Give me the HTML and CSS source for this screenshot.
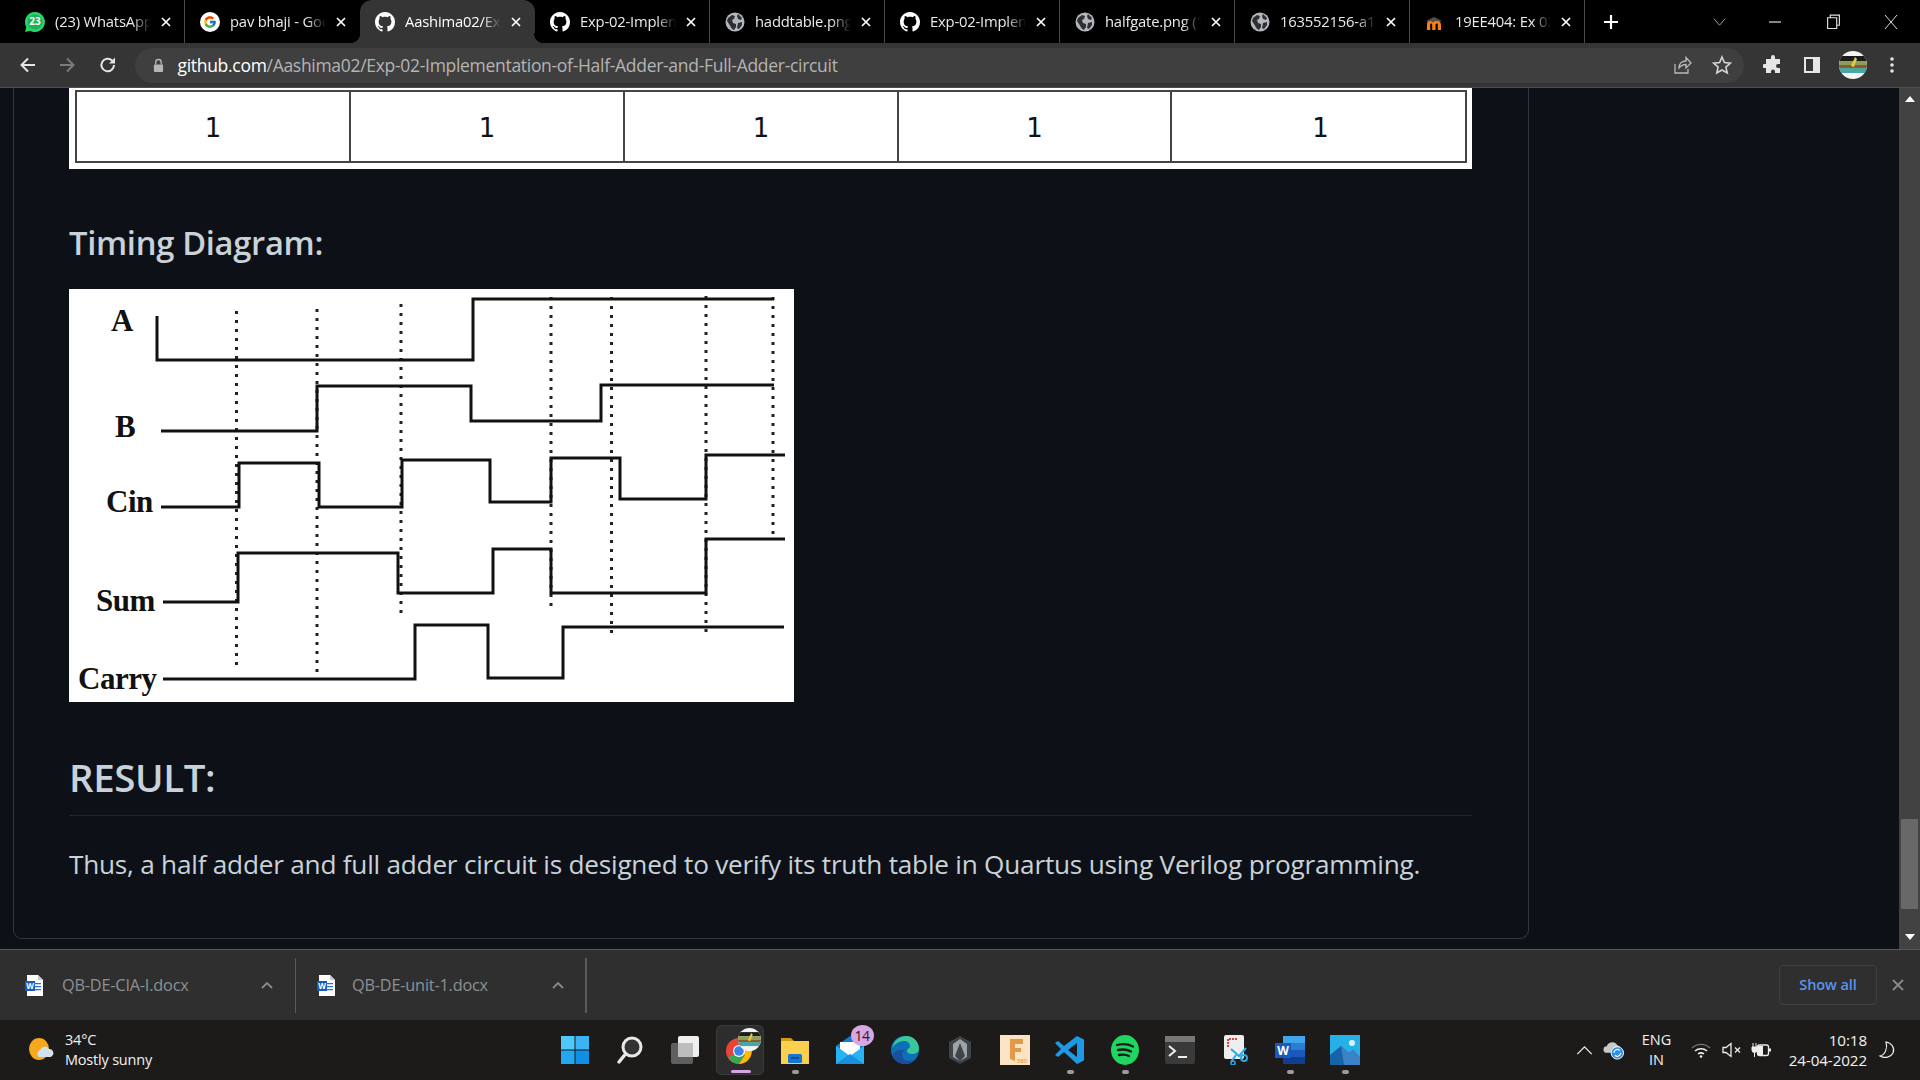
FILE: index.html
```html
<!DOCTYPE html>
<html lang="en">
<head>
<meta charset="utf-8">
<title>Exp-02</title>
<link rel="stylesheet" href="styles.css">
</head>
<body>
<svg class="defs" aria-hidden="true">
  <symbol id="gh" viewBox="0 0 16 16"><path fill="currentColor" d="M8 0C3.58 0 0 3.58 0 8c0 3.54 2.29 6.53 5.47 7.59.4.07.55-.17.55-.38 0-.19-.01-.82-.01-1.49-2.01.37-2.53-.49-2.69-.94-.09-.23-.48-.94-.82-1.13-.28-.15-.68-.52-.01-.53.63-.01 1.08.58 1.23.82.72 1.21 1.87.87 2.33.66.07-.52.28-.87.51-1.07-1.78-.2-3.64-.89-3.64-3.95 0-.87.31-1.59.82-2.15-.08-.2-.36-1.02.08-2.12 0 0 .67-.21 2.2.82.64-.18 1.32-.27 2-.27.68 0 1.36.09 2 .27 1.53-1.04 2.2-.82 2.2-.82.44 1.1.16 1.92.08 2.12.51.56.82 1.27.82 2.15 0 3.07-1.87 3.75-3.65 3.95.29.25.54.73.54 1.48 0 1.07-.01 1.93-.01 2.2 0 .21.15.46.55.38A8.013 8.013 0 0016 8c0-4.42-3.58-8-8-8z"/></symbol>
  <symbol id="globe" viewBox="0 0 20 20"><circle cx="10" cy="10" r="9.500" fill="#b4b7bb"/><path fill="#2d2f33" d="M3 6l4-3 3 1-1 3-2 1 1 3 3 1v3l-2 3c-3-1-4-5-5-6L2 9zM13 2l4 4-1 2-3-1-1-3zM13 11l4-1 0 3-3 4-2-1z"/></symbol>
  <symbol id="x" viewBox="0 0 12 12"><path d="M2 2l8 8M10 2l-8 8" stroke="currentColor" stroke-width="1.700" fill="none"/></symbol>
  <symbol id="word" viewBox="0 0 18 21"><path fill="#fff" d="M2 0h11l5 5v16H2z"/><path fill="#c9ccd2" d="M13 0l5 5h-5z"/><path fill="#2b6fd0" d="M10 8h6v1.200h-6zM10 11h6v1.200h-6zM10 14h6v1.200h-6z"/><rect y="6" width="10" height="10" fill="#185abd"/><text x="5" y="14.200" class="wordw">W</text></symbol>
  <symbol id="avatar" viewBox="0 0 28 28"><clipPath id="av"><circle cx="14" cy="14" r="14"/></clipPath><g clip-path="url(#av)"><rect width="28" height="28" fill="#f4f4f4"/><rect y="5" width="28" height="5" fill="#1c1c1c"/><rect y="10" width="28" height="4" fill="#8d9d5a"/><rect y="14" width="28" height="3" fill="#8a5a2d"/><rect y="17" width="28" height="5" fill="#49a6a0"/><path d="M12 15l4-9 2 2-3 8z" fill="#e6c93a"/></g></symbol>
</svg>

<div class="tabstrip">
  <div class="tab">
    <svg class="fav" viewBox="0 0 20 20"><path d="M10 0a10 10 0 1 1-5 18.700L0 20l1.300-5A10 10 0 0 1 10 0z" fill="#2bd46b"/><circle cx="10" cy="10" r="7.500" fill="#1eb257"/><text x="10" y="13.400" class="wa">23</text></svg>
    <span class="tab-title">(23) WhatsApp</span><svg class="tabx"><use href="#x"/></svg>
  </div>
  <div class="tab">
    <svg class="fav" viewBox="0 0 48 48"><circle cx="24" cy="24" r="24" fill="#fff"/><g transform="translate(7.200 7.200) scale(.7)"><path fill="#FFC107" d="M43.600 20.500H42V20H24v8h11.300C33.700 32.700 29.200 36 24 36c-6.600 0-12-5.400-12-12s5.400-12 12-12c3.100 0 5.800 1.200 8 3l5.700-5.700C34.100 6.100 29.300 4 24 4 13 4 4 13 4 24s9 20 20 20 20-9 20-20c0-1.200-.1-2.300-.4-3.500z"/><path fill="#FF3D00" d="M6.300 14.700l6.600 4.800C14.700 15.100 19 12 24 12c3.100 0 5.800 1.200 8 3l5.700-5.700C34.100 6.100 29.300 4 24 4 16.300 4 9.700 8.300 6.300 14.700z"/><path fill="#4CAF50" d="M24 44c5.200 0 9.900-2 13.400-5.200l-6.200-5.200C29.200 35.100 26.700 36 24 36c-5.200 0-9.600-3.300-11.300-7.900l-6.500 5C9.500 39.600 16.200 44 24 44z"/><path fill="#1976D2" d="M43.600 20.500H42V20H24v8h11.300c-.8 2.200-2.200 4.200-4.100 5.600l6.200 5.200C37 39.200 44 34 44 24c0-1.200-.1-2.300-.4-3.500z"/></g></svg>
    <span class="tab-title">pav bhaji - Google</span><svg class="tabx"><use href="#x"/></svg>
  </div>
  <div class="tab active">
    <svg class="fav"><use href="#gh"/></svg>
    <span class="tab-title">Aashima02/Exp-02</span><svg class="tabx"><use href="#x"/></svg>
  </div>
  <div class="tab">
    <svg class="fav"><use href="#gh"/></svg>
    <span class="tab-title">Exp-02-Implementation</span><svg class="tabx"><use href="#x"/></svg>
  </div>
  <div class="tab">
    <svg class="fav"><use href="#globe"/></svg>
    <span class="tab-title">haddtable.png (1)</span><svg class="tabx"><use href="#x"/></svg>
  </div>
  <div class="tab">
    <svg class="fav"><use href="#gh"/></svg>
    <span class="tab-title">Exp-02-Implementation</span><svg class="tabx"><use href="#x"/></svg>
  </div>
  <div class="tab">
    <svg class="fav"><use href="#globe"/></svg>
    <span class="tab-title">halfgate.png (1)</span><svg class="tabx"><use href="#x"/></svg>
  </div>
  <div class="tab">
    <svg class="fav"><use href="#globe"/></svg>
    <span class="tab-title">163552156-a1b2</span><svg class="tabx"><use href="#x"/></svg>
  </div>
  <div class="tab">
    <svg class="fav" viewBox="0 0 20 20"><path d="M1 9l8-4 8 4-8 3z" fill="#55504a"/><path d="M2 18v-6c0-2 1-3 3-3 1 0 2 .5 3 1.500C9 9.500 10 9 12 9c3 0 4 2 4 4v5h-3.200v-5c0-1-.3-1.500-1-1.500s-1.300.5-1.300 1.500v5H7.200v-5c0-1-.3-1.500-1-1.500s-1 .5-1 1.500v5z" fill="#f98012"/></svg>
    <span class="tab-title">19EE404: Ex 02</span><svg class="tabx"><use href="#x"/></svg>
  </div>
  <svg class="newtab" viewBox="0 0 16 16"><path d="M8 1v14M1 8h14" stroke="#fff" stroke-width="2.200"/></svg>
  <div class="winctl">
    <svg class="wc wc-first" viewBox="0 0 14 14"><path d="M1 4l6 7 6-7" fill="none" stroke="#aaa" stroke-width="1"/></svg>
    <svg class="wc" viewBox="0 0 14 14"><path d="M1 7h12" stroke="#ddd" stroke-width="1.200"/></svg>
    <svg class="wc" viewBox="0 0 14 14"><path d="M1.500 3.500h8.500v10H1.500zM4 3.500V1h8.500v9.500H10" fill="none" stroke="#ddd" stroke-width="1.100"/></svg>
    <svg class="wc" viewBox="0 0 14 14"><path d="M1 0l12 14M13 0L1 14" stroke="#ddd" stroke-width="1"/></svg>
  </div>
</div>

<div class="toolbar">
  <svg class="nav" viewBox="0 0 20 20"><path d="M17 10H4M10 3.500L3.500 10l6.500 6.500" fill="none" stroke="#e6e6e6" stroke-width="2"/></svg>
  <svg class="nav" viewBox="0 0 20 20"><path d="M3 10h13M10 3.500l6.500 6.500-6.500 6.500" fill="none" stroke="#7b7b7b" stroke-width="2"/></svg>
  <svg class="nav" viewBox="0 0 20 20"><path d="M16 10a6.300 6.300 0 1 1-1.900-4.500" fill="none" stroke="#e6e6e6" stroke-width="2"/><path d="M17 2.500v6h-6z" fill="#e6e6e6"/></svg>
  <div class="omnibox">
    <svg class="lock" viewBox="0 0 12 16"><path d="M3 7V4.500a3 3 0 0 1 6 0V7" fill="none" stroke="#b5b5b5" stroke-width="1.500"/><rect x="1" y="7" width="10" height="8" rx="1" fill="#b5b5b5"/></svg>
    <span class="url"><b>github.com</b>/Aashima02/Exp-02-Implementation-of-Half-Adder-and-Full-Adder-circuit</span>
    <svg class="omni-share" viewBox="0 0 20 20"><path d="M3 9v9h13v-4M7 13c0-5 3-7 7-7V2.500L19 8l-5 5V9.500c-3 0-5 1-7 3.500z" fill="none" stroke="#b9b9b9" stroke-width="1.300"/></svg>
    <svg class="omni-star" viewBox="0 0 20 20"><path d="M10 2l2.400 5.500 6 .6-4.500 4 1.300 5.900L10 15l-5.200 3 1.300-5.900-4.500-4 6-.6z" fill="none" stroke="#d5d5d5" stroke-width="1.600"/></svg>
  </div>
  <svg class="tool-puzzle" viewBox="0 0 20 20"><path fill="#e6e6e6" d="M8 2a2 2 0 0 1 4 0v2h5v5h-2a2 2 0 0 0 0 4h2v5h-5v-1.500a2 2 0 0 0-4 0V18H3v-5H1.500a2 2 0 0 1 0-4H3V4h5z"/></svg>
  <svg class="tool-panel" viewBox="0 0 18 18"><path d="M2 2h14v14H2z" fill="none" stroke="#e6e6e6" stroke-width="2"/><path d="M10 2h6v14h-6z" fill="#e6e6e6"/></svg>
  <svg class="tool-avatar"><use href="#avatar"/></svg>
  <svg class="tool-dots" viewBox="0 0 4 18"><circle cx="2" cy="3" r="1.800" fill="#e6e6e6"/><circle cx="2" cy="9" r="1.800" fill="#e6e6e6"/><circle cx="2" cy="15" r="1.800" fill="#e6e6e6"/></svg>
</div>

<div class="viewport">
  <div class="page">
    <article class="card">
      <div class="truth">
        <div class="truth-grid">
          <span class="cell">1</span><span class="cell">1</span><span class="cell">1</span><span class="cell">1</span><span class="cell">1</span>
        </div>
      </div>
      <h3 class="h3">Timing Diagram:</h3>
      <svg class="timing" viewBox="0 0 725 413">
        <rect width="725" height="413" fill="#fff"/>
        <g class="dots">
          <path d="M167.500 22V382M248 20V388M332 15V325M482 8V320M542.500 8V348M637 7V345M704 8V248"/>
        </g>
        <g class="waves">
          <path d="M88 27V71H404V10H705"/>
          <path d="M92 142H248V97H402V132H532V96H705"/>
          <path d="M92 218H170V174H250V218H333V171H421V213H482V169H551V210H637V166H716"/>
          <path d="M94 313H169V264H329V304H424V260H482V304H637V250H716"/>
          <path d="M94 390H346V336H419V389H494V338H715"/>
        </g>
        <g class="wavelabels">
          <text x="42" y="42">A</text>
          <text x="46" y="148">B</text>
          <text x="37" y="223">Cin</text>
          <text x="27" y="322">Sum</text>
          <text x="9" y="400">Carry</text>
        </g>
      </svg>
      <h2 class="h2">RESULT:</h2>
      <p class="para">Thus, a half adder and full adder circuit is designed to verify its truth table in Quartus using Verilog programming.</p>
    </article>
  </div>
  <div class="scrollbar">
    <span class="arrow-up"></span>
    <span class="thumb"></span>
    <span class="arrow-down"></span>
  </div>
</div>

<div class="downloads">
  <div class="dl">
    <svg class="dl-doc"><use href="#word"/></svg>
    <span class="dl-name">QB-DE-CIA-I.docx</span>
    <svg class="dl-caret" viewBox="0 0 12 8"><path d="M1 7l5-5 5 5" fill="none" stroke="#8a8a8a" stroke-width="1.800"/></svg>
  </div>
  <div class="dl">
    <svg class="dl-doc"><use href="#word"/></svg>
    <span class="dl-name">QB-DE-unit-1.docx</span>
    <svg class="dl-caret" viewBox="0 0 12 8"><path d="M1 7l5-5 5 5" fill="none" stroke="#8a8a8a" stroke-width="1.800"/></svg>
  </div>
  <span class="showall">Show all</span>
  <svg class="dl-close" viewBox="0 0 12 12"><path d="M1 1l10 10M11 1L1 11" stroke="#8a8a8a" stroke-width="1.800"/></svg>
</div>

<div class="taskbar">
  <div class="weather">
    <svg class="weather-icon" viewBox="0 0 26 24"><ellipse cx="11" cy="11" rx="10" ry="11" fill="#f5a81c"/><path d="M11 19a4 4 0 0 1 1-7 5 5 0 0 1 9-1 4 4 0 0 1 3 7 2 2 0 0 1-2 1z" fill="#cfe0ee"/></svg>
    <div class="weather-text"><span>34°C</span><span>Mostly sunny</span></div>
  </div>
  <div class="apps">
    <div class="app"><svg viewBox="0 0 30 30"><path fill="#50c8fa" d="M1 1h13.500v13.500H1z"/><path fill="#3bb3f5" d="M15.500 1H29v13.500H15.500z"/><path fill="#22a8f0" d="M1 15.500h13.500V29H1z"/><path fill="#0f8fe6" d="M15.500 15.500H29V29H15.500z"/></svg></div>
    <div class="app"><svg viewBox="0 0 30 30"><circle cx="17" cy="12" r="9" fill="#333" stroke="#e8e8e8" stroke-width="3"/><path d="M10.500 19L4 27" stroke="#e8e8e8" stroke-width="3.500" stroke-linecap="round"/></svg></div>
    <div class="app"><svg viewBox="0 0 30 30"><rect x="1" y="8" width="22" height="21" rx="2" fill="#5f5f5f"/><rect x="8" y="1" width="21" height="21" rx="2" fill="#efefef"/><rect x="8" y="8" width="15" height="14" fill="#bdbdbd"/></svg></div>
    <div class="app app-active"><svg class="chrome" viewBox="0 0 30 30"><circle cx="14" cy="16" r="13" fill="#e94335"/><path d="M14 16L3 22.500A13 13 0 0 0 14 29l6-9z" fill="#34a853"/><path d="M14 16l6 4-6 9a13 13 0 0 0 12-17H14z" fill="#fbbc05"/><circle cx="14" cy="16" r="6" fill="#fff"/><circle cx="14" cy="16" r="4.800" fill="#3b82f0"/></svg><svg class="chrome-avatar"><use href="#avatar"/></svg><i class="pill"></i></div>
    <div class="app"><svg viewBox="0 0 30 30"><path d="M1 3h10l3 3h-13z" fill="#d39a12"/><path d="M1 6h28v23H1z" fill="#fcd04f"/><rect x="8" y="19" width="14" height="9" rx="1.500" fill="#1476d4"/><rect x="11" y="22" width="8" height="2" fill="#08509c"/></svg><i class="dot"></i></div>
    <div class="app"><svg viewBox="0 0 30 30"><path d="M1 11L15 1l14 10v18H1z" fill="#0f7dd6"/><path d="M5 7h20v9l-10 6-10-6z" fill="#fff"/><path d="M1 11l14 10 14-10v18H1z" fill="#27b4f0"/><path d="M1 29l14-10 14 10z" fill="#1a8fe0"/></svg><span class="badge">14</span></div>
    <div class="app"><svg viewBox="0 0 30 30"><circle cx="15" cy="15" r="14" fill="#0c6fb8"/><path d="M2 13C4 5 10 1 16 1c8 0 13 6 13 13 0 3-3 5-7 5-3 0-5-1-5-3 0-3 3-2 3-5 0-3-3-5-6-5-6 0-10 4-12 7z" fill="#37c79b"/><path d="M3 19c0 6 6 10 12 10 5 0 8-2 10-4-8 3-13-1-13-5 0-2 1-4 3-5-6 0-10 0-12 4z" fill="#1b4f9c"/></svg></div>
    <div class="app"><svg viewBox="0 0 30 30"><path d="M15 1l11 6v16l-11 6-11-6V7z" fill="#3e4348"/><path d="M15 4l-7 5v13l7 4-5-5 5-13 5 13-5 5 7-4V9z" fill="#9ea3a8"/></svg></div>
    <div class="app"><svg viewBox="0 0 30 30"><rect width="30" height="30" fill="#fbe3c4"/><path d="M10 4h13v5h-8v4h6v4h-6v9l-5-2z" fill="#e09a4a"/><text x="22" y="28" class="flabel">380</text></svg></div>
    <div class="app"><svg viewBox="0 0 30 30"><path d="M22 1l7 3.500v21L22 29 9 17l-6 5-3-2 6-6-6-6 3-2 6 5z" fill="#1c9ae6"/><path d="M22 8v14l-9-7z" fill="#1b1b1b"/></svg><i class="dot"></i></div>
    <div class="app"><svg viewBox="0 0 30 30"><ellipse cx="15" cy="15" rx="14" ry="15" fill="#1fd760"/><path d="M7 10c6-1.500 11-1 16 1.500M8 15c5-1 9-.7 13 1.500M9 20c4-.8 7-.5 10 1" stroke="#1b1b1b" stroke-width="2.300" fill="none" stroke-linecap="round"/></svg><i class="dot"></i></div>
    <div class="app"><svg viewBox="0 0 30 30"><rect y="1" width="30" height="28" rx="2" fill="#3a3a3a"/><rect y="1" width="30" height="6" fill="#777"/><path d="M4 11l6 5-6 5" fill="none" stroke="#eee" stroke-width="2"/><path d="M13 22h9" stroke="#eee" stroke-width="2"/></svg></div>
    <div class="app"><svg viewBox="0 0 30 30"><rect x="4" y="0" width="20" height="24" rx="2" fill="#eee"/><path d="M8 12V4h9" fill="none" stroke="#e0433a" stroke-width="2" stroke-dasharray="2 1"/><path d="M11 14l8 7 7-8M16 20l-5 7" fill="none" stroke="#2ea7e6" stroke-width="2"/><circle cx="24" cy="23" r="3" fill="none" stroke="#2ea7e6" stroke-width="2"/><circle cx="13" cy="28" r="2" fill="none" stroke="#2ea7e6" stroke-width="1.500"/></svg></div>
    <div class="app"><svg viewBox="0 0 30 30"><path d="M8 1h22v28H8z" fill="#2b7cd3"/><path d="M8 1h22v7H8z" fill="#41a5ee"/><path d="M8 15h22v7H8z" fill="#185abd"/><path d="M8 22h22v7H8z" fill="#103f91"/><rect y="8" width="16" height="15" fill="#185abd"/><text x="8" y="20" class="wlabel">W</text></svg><i class="dot"></i></div>
    <div class="app"><svg viewBox="0 0 30 30"><rect width="30" height="30" fill="#27b0e8"/><path d="M0 30V20l11-9 8 7 4-3 7 7v8z" fill="#1763a8"/><path d="M11 11l8 7 4-3 7 7v8H14z" fill="#3d82c9"/><circle cx="22" cy="8" r="3" fill="#d9f2fc"/></svg><i class="dot"></i></div>
  </div>
  <div class="tray">
    <svg class="tr-chev" viewBox="0 0 18 10"><path d="M1 9l8-8 8 8" fill="none" stroke="#eee" stroke-width="1.400"/></svg>
    <svg class="tr-cloud" viewBox="0 0 22 20"><path d="M4 13a3.500 3.500 0 0 1 0-7 6 6 0 0 1 11-1 4 4 0 0 1 3 4v4z" fill="#c9c9c9"/><circle cx="15" cy="13" r="6.500" fill="#2f90e8" stroke="#fff" stroke-width="1"/><path d="M11.500 13a3.500 3.500 0 0 1 6-2.500M18.500 13a3.500 3.500 0 0 1-6 2.500" fill="none" stroke="#fff" stroke-width="1.300"/></svg>
    <div class="tr-lang"><span>ENG</span><span>IN</span></div>
    <svg class="tr-wifi" viewBox="0 0 20 16"><path d="M1 6a13 13 0 0 1 18 0" fill="none" stroke="#777" stroke-width="1.200"/><path d="M4 9a9 9 0 0 1 12 0M7 12a5 5 0 0 1 6 0" fill="none" stroke="#eee" stroke-width="1.500"/><circle cx="10" cy="14.500" r="1.300" fill="#eee"/></svg>
    <svg class="tr-mute" viewBox="0 0 20 16"><path d="M1 5.500h3L9 1.500v13l-5-4H1z" fill="none" stroke="#eee" stroke-width="1.300"/><path d="M13 5.500l5 5M18 5.500l-5 5" stroke="#eee" stroke-width="1.300"/></svg>
    <svg class="tr-batt" viewBox="0 0 20 16"><rect x="6.500" y="3" width="11" height="10.500" rx="2" fill="none" stroke="#eee" stroke-width="1.300"/><rect x="7" y="4" width="5" height="9" fill="#eee"/><path d="M18 6.500h2v3h-2z" fill="#eee"/><path d="M1 5h5v3a2.500 2.500 0 0 1-5 0zM3.500 10v5M2 5V1M5 5V1" fill="#eee" stroke="#eee" stroke-width="1"/></svg>
    <div class="tr-clock"><span>10:18</span><span>24-04-2022</span></div>
    <svg class="tr-moon" viewBox="0 0 18 18"><path d="M8 1c6 1 9 6 7 11-2 4-8 6-13 3 5-1 8-8 6-14z" fill="none" stroke="#eee" stroke-width="1.200"/></svg>
  </div>
</div>
</body>
</html>
```

FILE: styles.css
```css
* { box-sizing: border-box; }
html, body { margin: 0; padding: 0; }
body {
  width: 1920px;
  height: 1080px;
  overflow: hidden;
  font-family: "Open Sans", "Noto Sans", sans-serif;
  background: #0d1117;
  display: flex;
  flex-direction: column;
}
.defs { width: 0; height: 0; position: absolute; }
.wordw { font: 700 8px "Open Sans", sans-serif; fill: #fff; text-anchor: middle; }
.wa { font: 700 10px "Open Sans", sans-serif; fill: #fff; text-anchor: middle; }
.flabel { font: 400 6px "Open Sans", sans-serif; fill: #d8801f; text-anchor: middle; }
.wlabel { font: 700 12px "Open Sans", sans-serif; fill: #fff; text-anchor: middle; }

/* tab strip */
.tabstrip {
  height: 43px;
  flex: none;
  background: #000;
  display: flex;
  align-items: center;
  padding-left: 10px;
}
.tab {
  width: 175px;
  height: 43px;
  flex: none;
  display: flex;
  align-items: center;
  padding-left: 15px;
  position: relative;
  color: #e8eaed;
  border-right: 1px solid #4a4a4a;
}
.tab:nth-child(2) { border-right-color: transparent; }
.tab:nth-child(3) { border-right-color: transparent; }
.tab.active {
  background: #353535;
  border-radius: 12px 12px 0 0;
  color: #fff;
}
.tab.active::before, .tab.active::after {
  content: "";
  position: absolute;
  bottom: 0;
  width: 10px;
  height: 10px;
}
.tab.active::before { left: -10px; background: radial-gradient(circle at 0 0, #000 10px, #353535 10.500px); }
.tab.active::after { right: -10px; background: radial-gradient(circle at 100% 0, #000 10px, #353535 10.500px); }
.fav { width: 20px; height: 20px; flex: none; color: #fff; }
.tab-title {
  width: 96px;
  margin-left: 10px;
  padding-bottom: 2px;
  overflow: hidden;
  white-space: nowrap;
  font-size: 14.800px;
  letter-spacing: -.2px;
  -webkit-mask-image: linear-gradient(to right, #000 80%, transparent 100%);
  mask-image: linear-gradient(to right, #000 80%, transparent 100%);
}
.tabx { width: 12px; height: 12px; flex: none; margin-left: 9px; color: #fff; }
.newtab { width: 16px; height: 16px; flex: none; margin-left: 18px; }
.winctl { display: flex; align-items: center; margin-left: auto; }
.wc { width: 14px; height: 14px; flex: none; margin-right: 44px; }
.wc-first { width: 13px; height: 13px; margin-right: 42.500px; }
.wc:nth-child(3) { margin-right: 43px; width: 15px; height: 15px; }
.winctl .wc:last-child { margin-right: 22px; }

/* toolbar */
.toolbar {
  height: 45px;
  flex: none;
  background: #353535;
  border-bottom: 1px solid #4d4d4d;
  display: flex;
  align-items: center;
  padding-left: 18px;
}
.nav { width: 20px; height: 20px; flex: none; margin-right: 19px; }
.nav:nth-child(2) { margin-right: 21px; }
.nav:nth-child(3) { margin-right: 17px; }
.omnibox {
  width: 1609px;
  height: 35px;
  flex: none;
  background: #3f3f3f;
  border-radius: 18px;
  display: flex;
  align-items: center;
  padding-left: 17.500px;
  color: #a8a8a8;
}
.lock { width: 11px; height: 15px; flex: none; }
.url { margin-left: 14px; font-size: 17.500px; letter-spacing: -.3px; white-space: nowrap; color: #b4b4b4; }
.url b { font-weight: 400; color: #fff; }
.omni-share { width: 20px; height: 20px; margin-left: auto; flex: none; }
.omni-star { width: 20px; height: 20px; margin-left: 20px; margin-right: 12px; flex: none; }
.tool-puzzle { width: 20px; height: 20px; margin-left: 19px; flex: none; }
.tool-panel { width: 18px; height: 18px; margin-left: 20px; flex: none; }
.tool-avatar { width: 28px; height: 28px; margin-left: 18px; flex: none; }
.tool-dots { width: 4px; height: 18px; margin-left: 23px; flex: none; }

/* viewport */
.viewport { height: 861px; flex: none; display: flex; overflow: hidden; background: #0d1117; }
.page { width: 1899px; flex: none; padding-left: 13px; }
.card {
  width: 1516px;
  height: 851px;
  border: 1.500px solid #30363d;
  border-top: 0;
  border-radius: 0 0 9px 9px;
  padding-left: 55px;
  color: #c9d1d9;
}
.truth {
  width: 1403px;
  height: 81px;
  background: #fff;
  padding: 2px 5px 0 6px;
}
.truth-grid {
  display: grid;
  grid-template-columns: 274px 274px 274px 273px 297px;
  height: 73px;
  border: 2px solid #444;
}
.cell {
  display: flex;
  align-items: center;
  justify-content: center;
  padding-top: 2px;
  color: #111;
  font-family: "DejaVu Sans", sans-serif;
  font-size: 26px;
  border-right: 2px solid #444;
}
.cell:last-child { border-right: 0; }
.h3 {
  margin: 51px 0 0;
  font-size: 32.700px;
  line-height: 46px;
  font-weight: 600;
  letter-spacing: -.3px;
}
.timing { display: block; width: 725px; height: 413px; margin-top: 23px; }
.waves path { fill: none; stroke: #111; stroke-width: 3px; }
.dots path { fill: none; stroke: #222; stroke-width: 3px; stroke-dasharray: 3 6; }
.wavelabels text { font: 700 31px "Liberation Serif", serif; fill: #111; letter-spacing: -.5px; }
.h2 {
  margin: 47.500px 0 0;
  width: 1403px;
  height: 66px;
  font-size: 38.500px;
  line-height: 54px;
  font-weight: 600;
  letter-spacing: -.4px;
  border-bottom: 1.500px solid #21262d;
}
.para { margin: 24px 0 0; font-size: 26.200px; letter-spacing: -.23px; line-height: 48px; white-space: nowrap; }

/* scrollbar */
.scrollbar {
  width: 21px;
  flex: none;
  background: #424242;
  display: flex;
  flex-direction: column;
  align-items: center;
  padding-top: 8px;
}
.arrow-up { width: 0; height: 0; border: 5px solid transparent; border-top: 0; border-bottom: 6px solid #fff; }
.thumb { width: 17px; height: 90px; background: #686868; margin-top: 717px; }
.arrow-down { width: 0; height: 0; border: 5px solid transparent; border-bottom: 0; border-top: 6px solid #fff; margin-top: 25px; }

/* downloads */
.downloads {
  height: 71px;
  flex: none;
  background: #2f2f2f;
  border-top: 1px solid #5a5a5a;
  display: flex;
  align-items: center;
  padding-right: 16px;
}
.dl {
  width: 296px;
  height: 55px;
  flex: none;
  display: flex;
  align-items: center;
  padding-left: 25px;
  border-right: 1px solid #5a5a5a;
}
.dl + .dl { width: 291px; padding-left: 21px; border-right-width: 2px; }
.dl-doc { width: 18px; height: 21px; flex: none; }
.dl-name { margin-left: 19px; width: 199.500px; font-size: 16.300px; letter-spacing: -.2px; color: #8d9194; white-space: nowrap; }
.dl + .dl .dl-name { margin-left: 17px; width: 201px; }
.dl-caret { width: 12px; height: 8px; flex: none; margin-left: -1px; }
.showall {
  margin-left: auto;
  width: 98px;
  height: 40px;
  padding-bottom: 2px;
  border: 1px solid #404040;
  border-radius: 4px;
  display: flex;
  align-items: center;
  justify-content: center;
  font-size: 14.500px;
  font-weight: 600;
  color: #5a94ee;
  letter-spacing: -.1px;
}
.dl-close { width: 12px; height: 12px; flex: none; margin-left: 15px; }

/* taskbar */
.taskbar {
  height: 60px;
  flex: none;
  background: #1c1b1a;
  display: flex;
  align-items: center;
  position: relative;
  color: #f2f2f2;
}
.weather { display: flex; align-items: center; padding-left: 28px; width: 547.500px; flex: none; }
.weather-icon { width: 26px; height: 24px; flex: none; }
.weather-text { display: flex; flex-direction: column; margin-left: 11px; font-size: 14.500px; line-height: 20px; letter-spacing: -.2px; }
.apps { display: flex; align-items: center; flex: none; }
.app {
  width: 55px;
  height: 50px;
  flex: none;
  display: flex;
  align-items: center;
  justify-content: center;
  position: relative;
}
.app svg { width: 30px; height: 30px; }
.app-active { margin: 0 3.500px; width: 48px; background: #2d2d2d; border: 1px solid #3a3a3a; border-radius: 5px; }
.chrome-avatar.chrome-avatar { position: absolute; width: 23px; height: 23px; right: 2px; top: 2px; }
.pill { position: absolute; bottom: 1px; left: 14px; width: 20px; height: 3.500px; background: #d9a6e4; border-radius: 2px; }
.dot { position: absolute; bottom: 1px; left: 24px; width: 7px; height: 4px; border-radius: 2px; background: #9b9b9b; }
.badge {
  position: absolute;
  top: 0;
  right: 4px;
  width: 23px;
  height: 21px;
  border-radius: 50%;
  background: #d9a6e4;
  color: #222;
  font-size: 14px;
  line-height: 21px;
  text-align: center;
  letter-spacing: -.5px;
}
.tray { display: flex; align-items: center; margin-left: auto; flex: none; }
.tr-chev { width: 17px; height: 9px; }
.tr-cloud { width: 21px; height: 20px; margin-left: 10px; }
.tr-lang { display: flex; flex-direction: column; align-items: center; width: 40px; margin-left: 13px; font-size: 14.500px; line-height: 20.500px; }
.tr-wifi { width: 20px; height: 16px; margin-left: 14.500px; }
.tr-mute { width: 20px; height: 16px; margin-left: 11px; }
.tr-batt { width: 20px; height: 16px; margin-left: 9px; }
.tr-clock { display: flex; flex-direction: column; align-items: flex-end; width: 90px; margin-left: 6px; font-size: 15.200px; line-height: 20px; letter-spacing: -.1px; }
.tr-moon { width: 18px; height: 18px; margin-left: 11px; margin-right: 24px; }
```
